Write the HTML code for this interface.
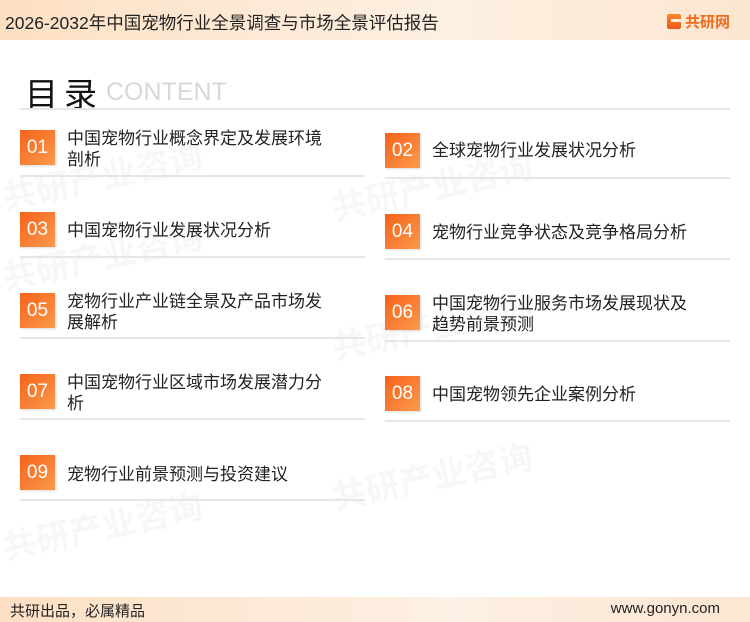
<!DOCTYPE html>
<html><head><meta charset="utf-8"><style>
*{margin:0;padding:0;box-sizing:border-box}
body{width:750px;height:622px;position:relative;background:#fff;font-family:"Liberation Sans","Noto Sans CJK SC",sans-serif;overflow:hidden;color:#222}
.hdr{position:absolute;left:0;top:0;width:750px;height:40px;background:linear-gradient(90deg,#fde0c4,#fdf0e2 60%,#fde6d0)}
.hdr .t{position:absolute;left:5px;top:10px;font-size:17.5px;color:#222}
.logo{position:absolute;left:667px;top:11px;font-size:15px;font-weight:bold;color:#f26a1b}
.logo i{display:inline-block;width:14px;height:15px;background:linear-gradient(#fa8a2a,#f0561a);border-radius:2px;vertical-align:-2px;margin-right:4px;position:relative}
.logo i:after{content:"";position:absolute;left:4px;top:5px;width:10px;height:3px;background:#fdf0e2}
.ttl{position:absolute;left:25px;top:68px;font-size:33px;color:#111;letter-spacing:6px}
.en{position:absolute;left:106px;top:78px;font-size:25px;color:#d8d8d8}
.hl{position:absolute;left:20px;top:108px;width:710px;height:2px;background:#e6e6e6}
.box{position:absolute;width:35px;height:35px;background:linear-gradient(135deg,#f6621a,#fb9a4c);color:#fff;font-size:19px;text-align:center;line-height:35px;box-shadow:1px 1px 2px rgba(0,0,0,.15)}
.txt{position:absolute;font-size:17px;line-height:21px;color:#222;width:262px}
.dl{position:absolute;height:2px;width:345px;background:#e6e6e6}
.ftr{position:absolute;left:0;top:597px;width:750px;height:25px;background:linear-gradient(90deg,#fde0c4,#fdf0e4 60%,#fde6d2)}
.ftr .a{position:absolute;left:10px;top:3px;font-size:15px}
.ftr .b{position:absolute;right:30px;top:3px;font-size:15px}
.wm{position:absolute;color:rgba(0,0,0,.03);font-size:34px;font-weight:bold;transform:rotate(-12deg);white-space:nowrap}
</style></head><body>
<div class="hdr"><div class="t">2026-2032年中国宠物行业全景调查与市场全景评估报告</div><div class="logo"><i></i>共研网</div></div>
<div class="wm" style="left:0;top:150px">共研产业咨询</div>
<div class="wm" style="left:330px;top:160px">共研产业咨询</div>
<div class="wm" style="left:0;top:230px">共研产业咨询</div>
<div class="wm" style="left:330px;top:300px">共研产业咨询</div>
<div class="wm" style="left:0;top:500px">共研产业咨询</div>
<div class="wm" style="left:330px;top:450px">共研产业咨询</div>
<div class="ttl">目录</div><div class="en">CONTENT</div>
<div class="hl"></div>

<div class="box" style="left:20px;top:130px">01</div><div class="txt" style="left:67px;top:128px">中国宠物行业概念界定及发展环境剖析</div><div class="dl" style="left:20px;top:175px"></div>
<div class="box" style="left:385px;top:133px">02</div><div class="txt" style="left:432px;top:140px">全球宠物行业发展状况分析</div><div class="dl" style="left:385px;top:177px"></div>

<div class="box" style="left:20px;top:212px">03</div><div class="txt" style="left:67px;top:220px">中国宠物行业发展状况分析</div><div class="dl" style="left:20px;top:256px"></div>
<div class="box" style="left:385px;top:214px">04</div><div class="txt" style="left:432px;top:222px">宠物行业竞争状态及竞争格局分析</div><div class="dl" style="left:385px;top:258px"></div>

<div class="box" style="left:20px;top:293px">05</div><div class="txt" style="left:67px;top:291px">宠物行业产业链全景及产品市场发展解析</div><div class="dl" style="left:20px;top:337px"></div>
<div class="box" style="left:385px;top:295px">06</div><div class="txt" style="left:432px;top:293px">中国宠物行业服务市场发展现状及趋势前景预测</div><div class="dl" style="left:385px;top:340px"></div>

<div class="box" style="left:20px;top:374px">07</div><div class="txt" style="left:67px;top:372px">中国宠物行业区域市场发展潜力分析</div><div class="dl" style="left:20px;top:418px"></div>
<div class="box" style="left:385px;top:376px">08</div><div class="txt" style="left:432px;top:384px">中国宠物领先企业案例分析</div><div class="dl" style="left:385px;top:420px"></div>

<div class="box" style="left:20px;top:455px">09</div><div class="txt" style="left:67px;top:464px">宠物行业前景预测与投资建议</div><div class="dl" style="left:20px;top:499px"></div>

<div class="ftr"><div class="a">共研出品，必属精品</div><div class="b">www.gonyn.com</div></div>
</body></html>
